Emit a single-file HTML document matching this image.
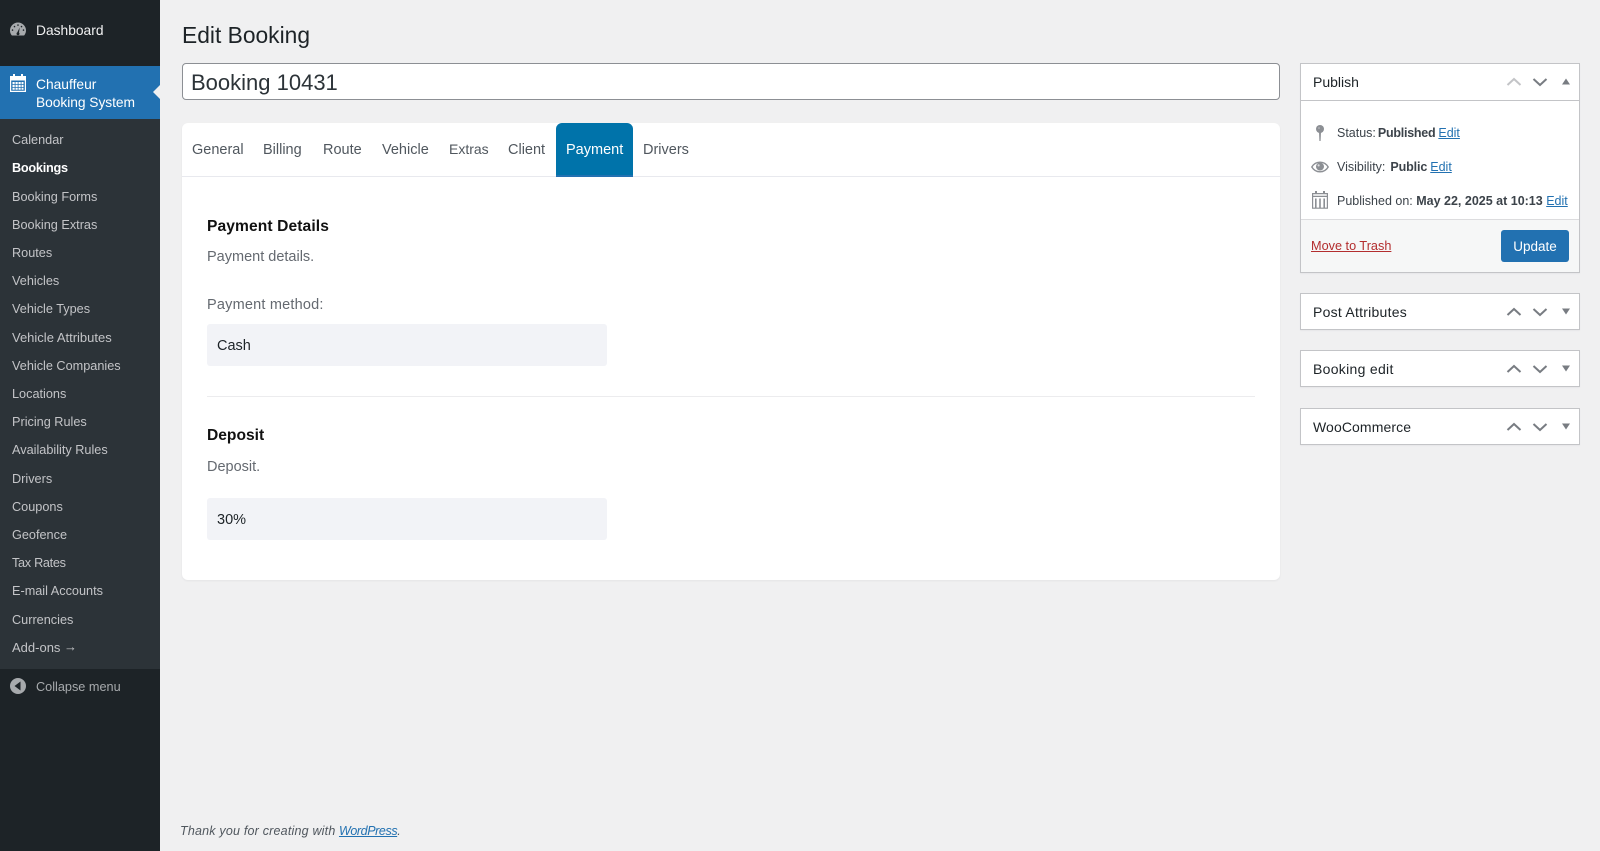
<!DOCTYPE html>
<html lang="en"><head><meta charset="utf-8"><title>Edit Booking</title>
<style>
html,body{margin:0;padding:0;width:1600px;height:851px;overflow:hidden;background:#f0f0f1;font-family:"Liberation Sans",sans-serif;font-size:13px;color:#3c434a}
.a{position:absolute}
.t{position:absolute;white-space:nowrap;line-height:20px;height:20px}
#side{left:0;top:0;width:160px;height:851px;background:#1d2327}
#sub{left:0;top:119px;width:160px;height:550px;background:#2c3338}
#act{left:0;top:66px;width:160px;height:53px;background:#2271b1}
.m{color:#c3c4c7;left:12px;font-size:12.7px}
.box{position:absolute;left:1300px;width:278px;background:#fff;border:1px solid #c3c4c7;box-shadow:0 1px 1px rgba(0,0,0,.04)}
.h{font-size:14px;color:#1d2327;left:1313px}
a{color:#2271b1;text-decoration:underline}
.tab{font-size:14.5px;color:#50575e;top:140px}
.g{color:#646970;font-size:14.5px;left:207px}
.b{color:#111;font-weight:bold;font-size:15.6px;left:207px}
.sel{position:absolute;left:207px;width:400px;height:42px;background:#f2f3f7;border-radius:3px}
.v{color:#1d2327;font-size:14.5px;left:217px}
</style></head><body>
<div id="side" class="a"></div>
<div id="sub" class="a"></div>
<div id="act" class="a"></div>
<svg class="a" style="left:153px;top:84px" width="7" height="16"><path d="M8 0 0 8l8 8z" fill="#f0f0f1"/></svg>

<svg class="a" style="left:10px;top:22px" width="16" height="16" viewBox="0 0 16 16"><path fill-rule="evenodd" fill="#a7aaad" d="M8 .5a8 8 0 0 0-8 8c0 2 .7 3.700 1.900 5h12.200A8 8 0 0 0 16 8.500a8 8 0 0 0-8-8zM2.500 7.300a.8.8 0 1 1 0 1.600.8.8 0 0 1 0-1.600zm2-3.500a.8.8 0 1 1 0 1.600.8.8 0 0 1 0-1.600zM8 2.300a.8.8 0 1 1 0 1.600.8.8 0 0 1 0-1.600zm3.500 1.500a.8.8 0 1 1 0 1.600.8.8 0 0 1 0-1.600zm2 3.500a.8.8 0 1 1 0 1.600.8.8 0 0 1 0-1.600zM9.700 5.500 9 10.600a1.500 1.500 0 1 1-1.700-.2z"/></svg>
<div class="t" style="left:36px;top:21px;color:#f0f0f1;font-size:13.8px">Dashboard</div>

<svg class="a" style="left:10px;top:74px" width="16" height="18" viewBox="0 0 16 18"><path fill="#fff" fill-rule="evenodd" d="M3 0h2v2h6V0h2v2h3v16H0V2h3zM1.200 6.500v10.300h13.600V6.500zM2.500 8h2.200v2.200H2.500zm3 0h2.200v2.200H5.500zm3 0h2.200v2.200H8.500zm3 0h2v2.200h-2zM2.500 11h2.200v2.200H2.500zm3 0h2.200v2.200H5.500zm3 0h2.200v2.200H8.500zm3 0h2v2.200h-2zM2.500 14h2.200v1.800H2.500zm3 0h2.200v1.800H5.500zm3 0h2.200v1.800H8.500zm3 0h2v1.800h-2z"/></svg>
<div class="t" style="left:36px;top:75px;color:#fff;font-size:13.8px">Chauffeur</div>
<div class="t" style="left:36px;top:93px;color:#fff;font-size:13.8px;letter-spacing:-.05px">Booking System</div>

<div class="t m" style="top:130px">Calendar</div>
<div class="t m" style="top:158px;color:#fff;font-weight:bold;letter-spacing:-.25px">Bookings</div>
<div class="t m" style="top:187px">Booking Forms</div>
<div class="t m" style="top:215px">Booking Extras</div>
<div class="t m" style="top:243px">Routes</div>
<div class="t m" style="top:271px">Vehicles</div>
<div class="t m" style="top:299px">Vehicle Types</div>
<div class="t m" style="top:328px;font-size:13px">Vehicle Attributes</div>
<div class="t m" style="top:356px">Vehicle Companies</div>
<div class="t m" style="top:384px">Locations</div>
<div class="t m" style="top:412px">Pricing Rules</div>
<div class="t m" style="top:440px">Availability Rules</div>
<div class="t m" style="top:469px">Drivers</div>
<div class="t m" style="top:497px">Coupons</div>
<div class="t m" style="top:525px">Geofence</div>
<div class="t m" style="top:553px;letter-spacing:-.3px">Tax Rates</div>
<div class="t m" style="top:581px">E-mail Accounts</div>
<div class="t m" style="top:610px">Currencies</div>
<div class="t m" style="top:638px;font-size:13px">Add-ons <span style="position:relative;top:-1px">→</span></div>

<svg class="a" style="left:10px;top:678px" width="16" height="16" viewBox="0 0 16 16"><circle cx="8" cy="8" r="8" fill="#a7aaad"/><path d="M10.500 3.500v9L4.500 8z" fill="#1d2327"/></svg>
<div class="t" style="left:36px;top:677px;color:#a7aaad;font-size:12.7px">Collapse menu</div>

<div class="t" style="left:182px;top:20px;height:30px;line-height:30px;font-size:22.800px;color:#1d2327">Edit Booking</div>

<div class="a" style="left:182px;top:63px;width:1096px;height:35px;background:#fff;border:1px solid #8c8f94;border-radius:4px"></div>
<div class="t" style="left:191px;top:67px;height:32px;line-height:32px;font-size:22px;color:#2c3338">Booking 10431</div>

<div class="a" style="left:182px;top:123px;width:1098px;height:457px;background:#fff;border-radius:6px;box-shadow:0 1px 2px rgba(0,0,0,.05)"></div>
<div class="a" style="left:182px;top:176px;width:1098px;height:1px;background:#e8e9ee"></div>
<div class="a" style="left:556px;top:123px;width:77px;height:54px;background:#0073aa;border-radius:6px 6px 0 0;box-shadow:inset 0 -2px 0 #2271b1"></div>
<div class="t tab" style="left:192px">General</div>
<div class="t tab" style="left:263px">Billing</div>
<div class="t tab" style="left:323px">Route</div>
<div class="t tab" style="left:382px">Vehicle</div>
<div class="t tab" style="left:449px;font-size:14px;top:139px">Extras</div>
<div class="t tab" style="left:508px">Client</div>
<div class="t tab" style="left:566px;color:#fff">Payment</div>
<div class="t tab" style="left:643px">Drivers</div>

<div class="t b" style="top:217px;letter-spacing:.1px">Payment Details</div>
<div class="t g" style="top:247px">Payment details.</div>
<div class="t g" style="top:295px;letter-spacing:.2px">Payment method:</div>
<div class="sel" style="top:324px"></div>
<div class="t v" style="top:336px">Cash</div>
<div class="a" style="left:207px;top:396px;width:1048px;height:1px;background:#ececee"></div>
<div class="t b" style="top:426px">Deposit</div>
<div class="t g" style="top:457px">Deposit.</div>
<div class="sel" style="top:498px"></div>
<div class="t v" style="top:510px">30%</div>

<!-- Publish -->
<div class="box" style="top:63px;height:208px"></div>
<div class="a" style="left:1301px;top:100px;width:278px;height:1px;background:#c3c4c7"></div>
<div class="a" style="left:1301px;top:219px;width:278px;height:53px;background:#f6f7f7;border-top:1px solid #dcdcde;box-sizing:border-box"></div>
<div class="t h" style="top:72px">Publish</div>

<svg class="a" style="left:1505px;top:76px" width="70" height="12" viewBox="0 0 70 12" fill="none"><path d="M2.500 9 9 3l6.500 6" stroke="#c3c4c7" stroke-width="2"/><path d="M28.500 3 35 9l6.500-6" stroke="#787c82" stroke-width="2"/><path d="M57 8.500l4-6L65 8.500z" fill="#787c82"/></svg>

<svg class="a" style="left:1314px;top:124px" width="12" height="18" viewBox="0 0 12 18"><circle cx="6" cy="5" r="4" fill="#8c8f94"/><circle cx="5" cy="4" r=".8" fill="#c3c4c7"/><path d="M5 8h2l-.4 9h-1.200z" fill="#8c8f94"/></svg>
<div class="t" style="left:1337px;top:123px;font-size:12.500px">Status: <b style="letter-spacing:-.25px;margin-left:-1.500px">Published</b> <a href="#" style="margin-left:-.5px">Edit</a></div>

<svg class="a" style="left:1311px;top:159px" width="18" height="16" viewBox="0 0 18 16"><path fill="none" stroke="#8c8f94" stroke-width="1.400" d="M.8 8C2.600 5 5.400 3.200 9 3.200S15.400 5 17.200 8C15.400 11 12.600 12.800 9 12.800S2.600 11 .8 8z"/><circle cx="9" cy="7.600" r="4" fill="#8c8f94"/><circle cx="7.600" cy="6.400" r="1.100" fill="#dcdcde"/></svg>
<div class="t" style="left:1337px;top:157px;font-size:12.500px">Visibility: <b style="letter-spacing:-.1px;margin-left:1.500px">Public</b> <a href="#" style="margin-left:-.5px">Edit</a></div>

<svg class="a" style="left:1312px;top:191px" width="16" height="18" viewBox="0 0 16 18"><path fill="#8c8f94" fill-rule="evenodd" d="M3 0h2v2h6V0h2v2h3v15.800H0V2h3zM1.200 3.200v1.600h13.600V3.200zM1.200 6v10.600h1.800V7.500h1.600v9.100h2.600V7.500H8.800v9.100h2.600V7.500H13v9.100h1.800V6z"/></svg>
<div class="t" style="left:1337px;top:191px;font-size:12.500px">Published on: <b>May 22, 2025 at 10:13</b> <a href="#">Edit</a></div>

<div class="t" style="left:1311px;top:236px;font-size:12.700px"><a href="#" style="color:#b32d2e">Move to Trash</a></div>
<div class="a" style="left:1501px;top:230px;width:68px;height:32px;line-height:33px;text-align:center;background:#2271b1;color:#fff;border-radius:3px;font-size:13.500px">Update</div>

<!-- Post Attributes -->
<div class="box" style="top:293px;height:35px"></div>
<div class="t h" style="top:302px;letter-spacing:.25px">Post Attributes</div>
<svg class="a" style="left:1505px;top:306px" width="70" height="12" viewBox="0 0 70 12" fill="none"><path d="M2.500 9 9 3l6.500 6" stroke="#787c82" stroke-width="2"/><path d="M28.500 3 35 9l6.500-6" stroke="#787c82" stroke-width="2"/><path d="M57 2.500l4 6L65 2.500z" fill="#787c82"/></svg>

<div class="box" style="top:350px;height:35px"></div>
<div class="t h" style="top:359px;letter-spacing:.3px">Booking edit</div>
<svg class="a" style="left:1505px;top:363px" width="70" height="12" viewBox="0 0 70 12" fill="none"><path d="M2.500 9 9 3l6.500 6" stroke="#787c82" stroke-width="2"/><path d="M28.500 3 35 9l6.500-6" stroke="#787c82" stroke-width="2"/><path d="M57 2.500l4 6L65 2.500z" fill="#787c82"/></svg>

<div class="box" style="top:408px;height:35px"></div>
<div class="t h" style="top:417px;letter-spacing:.1px">WooCommerce</div>
<svg class="a" style="left:1505px;top:421px" width="70" height="12" viewBox="0 0 70 12" fill="none"><path d="M2.500 9 9 3l6.500 6" stroke="#787c82" stroke-width="2"/><path d="M28.500 3 35 9l6.500-6" stroke="#787c82" stroke-width="2"/><path d="M57 2.500l4 6L65 2.500z" fill="#787c82"/></svg>

<div class="t" style="left:180px;top:821px;font-style:italic;color:#50575e;font-size:12.500px"><span style="letter-spacing:.2px">Thank you for creating with</span> <a href="#" style="letter-spacing:-.4px">WordPress</a>.</div>
</body></html>
